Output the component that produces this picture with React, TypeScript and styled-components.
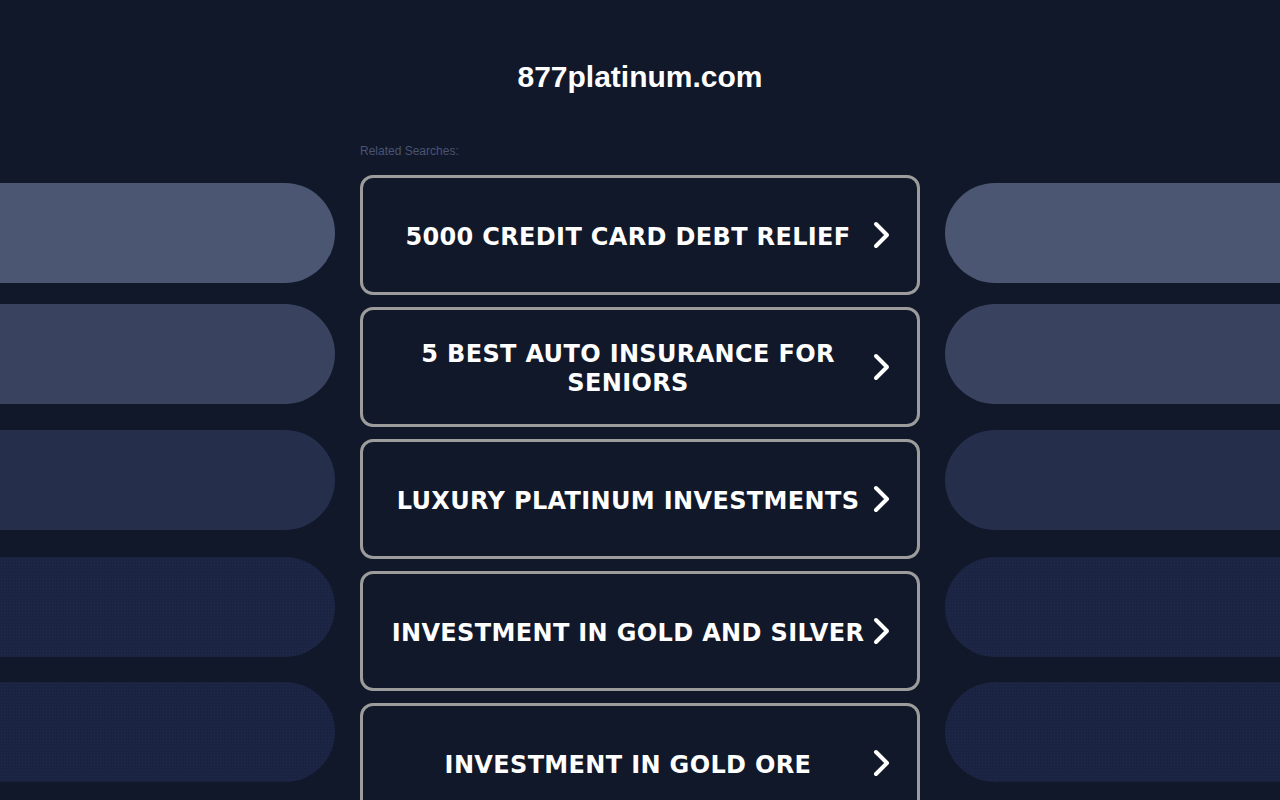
import React from "react";
import styled, {createGlobalStyle} from "styled-components";

const GlobalStyle = createGlobalStyle`
  html, body {
    margin: 0;
    padding: 0;
    background: #111829;
    overflow: hidden;
  }
`;

const Page = styled.div`
  width: 1280px;
  height: 800px;
  background: #111829;
  overflow: hidden;
  font-family: "Liberation Sans", Arial, sans-serif;
`;

const Header = styled.header`
  padding: 59px 0 45px;
  text-align: center;

  h1 {
    margin: 0;
    font-size: 30px;
    line-height: 36px;
    font-weight: 700;
    color: #ffffff;
  }
`;

const Layout = styled.div`
  display: grid;
  grid-template-columns: 1fr 560px 1fr;
  column-gap: 25px;
`;

const Side = styled.div`
  display: flex;
  flex-direction: column;
`;

const Pill = styled.div<{ $side: "left" | "right"; $tone: string; $top: number; $dotted?: boolean }>`
  height: 100px;
  margin-top: ${({$top}) => $top}px;
  background-color: ${({$tone}) => $tone};
  background-image: ${({$dotted}) => $dotted
    ? "radial-gradient(rgba(60, 75, 120, 0.18) 0.6px, transparent 0.8px)"
    : "none"};
  background-size: 3px 3px;
  border-radius: ${({$side}) => $side === "left" ? "0 50px 50px 0" : "50px 0 0 50px"};
`;

const Center = styled.main`
  display: flex;
  flex-direction: column;
`;

const Label = styled.div`
  margin-top: 4px;
  font-size: 12px;
  line-height: 15px;
  color: #4a5474;
`;

const List = styled.div`
  margin-top: 16px;
  display: flex;
  flex-direction: column;
  gap: 12px;
`;

const Card = styled.a`
  box-sizing: border-box;
  height: 120px;
  border: 3px solid #9c9c9c;
  border-radius: 13px;
  display: flex;
  align-items: center;
  padding: 4px 26px 0 20px;
  color: #ffffff;
  text-decoration: none;
  cursor: pointer;
`;

const CardText = styled.span`
  flex: 1;
  text-align: center;
  font-family: "DejaVu Sans", Verdana, sans-serif;
  font-weight: 700;
  font-size: 24px;
  line-height: 29px;
  letter-spacing: 0.35px;
`;

const ChevronBox = styled.span`
  display: flex;
  margin-top: -4px;
`;

const Chevron = () => (
  <ChevronBox>
    <svg width="18" height="28" viewBox="0 0 18 28" fill="none">
      <path d="M3 3 L14 14 L3 25" stroke="#ffffff" strokeWidth="4" strokeLinecap="round" strokeLinejoin="round"/>
    </svg>
  </ChevronBox>
);

const searches = [
  "5000 CREDIT CARD DEBT RELIEF",
  "5 BEST AUTO INSURANCE FOR SENIORS",
  "LUXURY PLATINUM INVESTMENTS",
  "INVESTMENT IN GOLD AND SILVER",
  "INVESTMENT IN GOLD ORE",
];

const pills = [
  {tone: "#4b5672", top: 43},
  {tone: "#39425f", top: 21},
  {tone: "#252e4b", top: 26},
  {tone: "#1c2443", top: 27, dotted: true},
  {tone: "#1b2342", top: 25, dotted: true},
];

const App = () => {
  return <Page>
    <GlobalStyle/>
    <Header>
      <h1>877platinum.com</h1>
    </Header>
    <Layout>
      <Side>
        {pills.map((p, i) => <Pill key={i} $side="left" $tone={p.tone} $top={p.top} $dotted={p.dotted}/>)}
      </Side>
      <Center>
        <Label>Related Searches:</Label>
        <List>
          {searches.map((s, i) => (
            <Card key={i}>
              <CardText>{s}</CardText>
              <Chevron/>
            </Card>
          ))}
        </List>
      </Center>
      <Side>
        {pills.map((p, i) => <Pill key={i} $side="right" $tone={p.tone} $top={p.top} $dotted={p.dotted}/>)}
      </Side>
    </Layout>
  </Page>;
};

export default App;
